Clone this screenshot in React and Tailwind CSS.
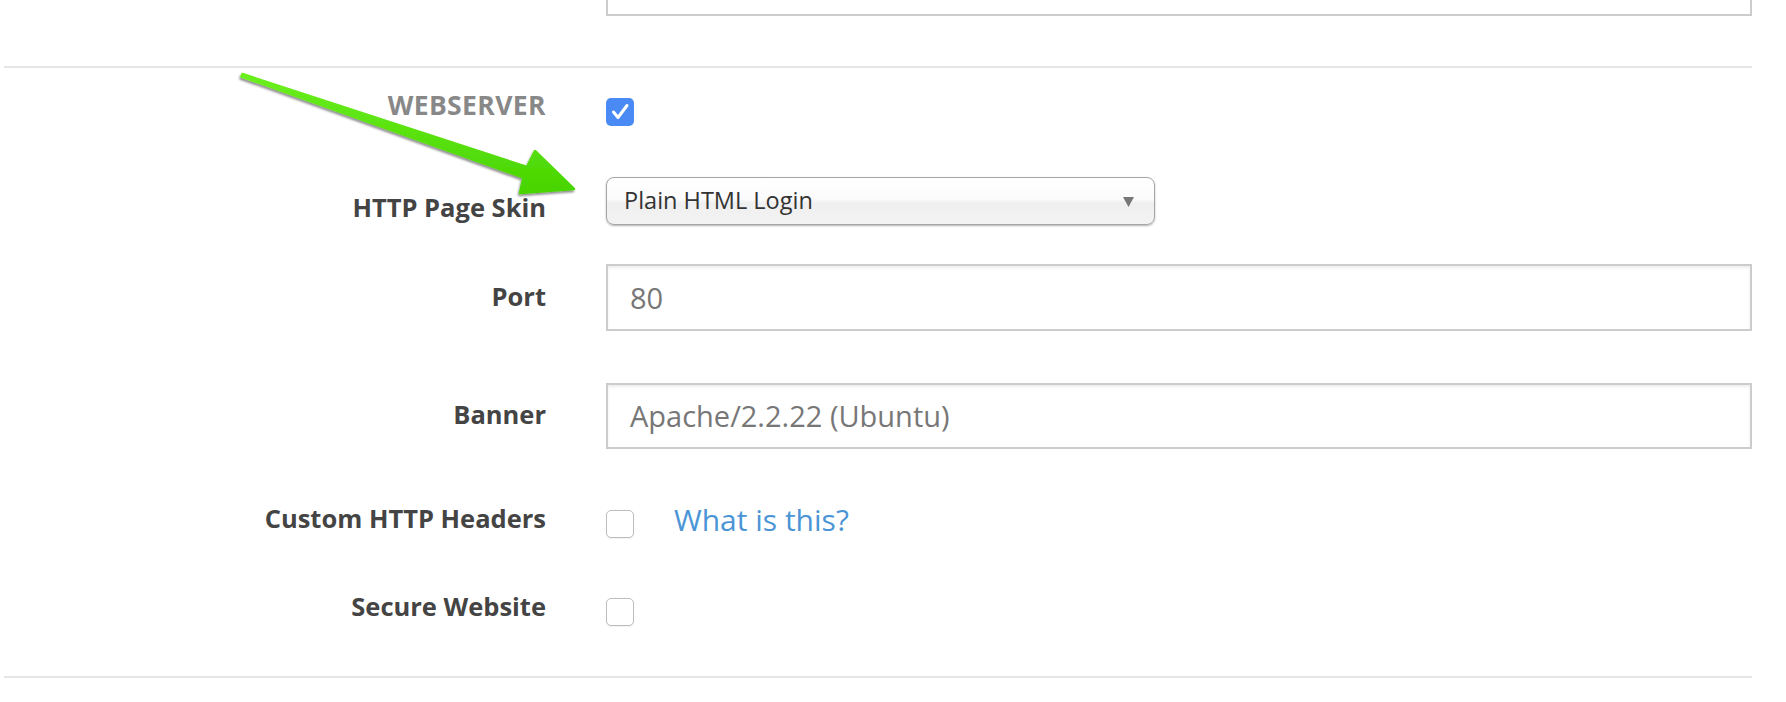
import React from "react";

function Checkbox({ checked }) {
  if (checked) {
    return (
      <div className="w-[28px] h-[28px] rounded-[5px] bg-[#4a8af4] flex items-center justify-center">
        <svg width="28" height="28" viewBox="0 0 28 28">
          <path d="M7.5 14 L12 19.5 L21 7.5" fill="none" stroke="#ffffff" strokeWidth="3" strokeLinecap="round" strokeLinejoin="round" />
        </svg>
      </div>
    );
  }
  return (
    <div className="w-[28px] h-[28px] rounded-[5px] bg-white border-[1.5px] border-[#bdbdbd] shadow-[0_1px_1px_rgba(0,0,0,0.06)]" />
  );
}

function TextInput({ value, h }) {
  return (
    <div className={`${h} w-full border-2 border-[#cccccc] bg-white shadow-[inset_0_2px_3px_rgba(0,0,0,0.07)] flex items-center pl-[22px] text-[29px] text-[#777777]`}>
      {value}
    </div>
  );
}

export default function App() {
  const label = "w-[542px] shrink-0 text-right text-[25.5px] leading-[34px] font-bold text-[#444444]";
  return (
    <div
      className="relative w-[1786px] h-[702px] bg-white overflow-hidden"
      style={{ fontFamily: '"Open Sans", "Noto Sans", sans-serif' }}
    >
      <div className="ml-[4px] w-[1748px]">
        {/* cut-off input at top */}
        <div className="flex">
          <div className="w-[542px] shrink-0" />
          <div className="ml-[60px] flex-1 h-[16px] border-x-2 border-b-2 border-[#cccccc] bg-white" />
        </div>
        <div className="mt-[50px] h-[2px] bg-[#e6e6e6]" />

        {/* WEBSERVER */}
        <div className="flex h-[82px]">
          <div className={`${label} pt-[20px]`}>
            <span className="text-[#888888] text-[26.5px] tracking-[0.4px]">WEBSERVER</span>
          </div>
          <div className="ml-[60px] flex-1 pt-[30px]">
            <Checkbox checked />
          </div>
        </div>

        {/* HTTP Page Skin */}
        <div className="flex h-[90px]">
          <div className={`${label} pt-[40px]`}>HTTP Page Skin</div>
          <div className="ml-[60px] flex-1 pt-[27px]">
            <div className="relative w-[549px] h-[48px] rounded-[8px] border-[1.5px] border-[#a6a6a6] bg-[linear-gradient(to_bottom,#ffffff_0%,#fbfbfb_45%,#efefef_55%,#f3f3f3_100%)] shadow-[0_1px_2px_rgba(0,0,0,0.3)] flex items-center pl-[17px] text-[23.5px] text-[#333333]">
              Plain HTML Login
              <svg className="absolute right-[20px] top-[19px]" width="11" height="10" viewBox="0 0 11 10">
                <path d="M0 0 L11 0 L5.5 10 Z" fill="#777777" />
              </svg>
            </div>
          </div>
        </div>

        {/* Port */}
        <div className="flex h-[120px]">
          <div className={`${label} pt-[39px]`}>Port</div>
          <div className="ml-[60px] flex-1 pt-[24px]">
            <TextInput value="80" h="h-[67px]" />
          </div>
        </div>

        {/* Banner */}
        <div className="flex h-[120px]">
          <div className={`${label} pt-[37px]`}>Banner</div>
          <div className="ml-[60px] flex-1 pt-[23px]">
            <TextInput value="Apache/2.2.22 (Ubuntu)" h="h-[66px]" />
          </div>
        </div>

        {/* Custom HTTP Headers */}
        <div className="flex h-[90px]">
          <div className={`${label} pt-[21px]`}>Custom HTTP Headers</div>
          <div className="ml-[60px] flex-1 flex items-start">
            <div className="mt-[30px]">
              <Checkbox />
            </div>
            <a className="ml-[40px] mt-[20px] text-[30px] leading-[40px] text-[#4b95d6]">What is this?</a>
          </div>
        </div>

        {/* Secure Website */}
        <div className="flex h-[106px]">
          <div className={`${label} pt-[19px]`}>Secure Website</div>
          <div className="ml-[60px] flex-1 pt-[28px]">
            <Checkbox />
          </div>
        </div>

        <div className="h-[2px] bg-[#e6e6e6]" />
      </div>

      {/* green annotation arrow */}
      <svg className="absolute left-0 top-0 pointer-events-none" width="1786" height="702" viewBox="0 0 1786 702">
        <defs>
          <linearGradient id="g" x1="0" y1="0" x2="0" y2="1">
            <stop offset="0%" stopColor="#6bef1e" />
            <stop offset="100%" stopColor="#48d400" />
          </linearGradient>
          <filter id="sh" x="-10%" y="-10%" width="120%" height="130%">
            <feDropShadow dx="-1" dy="2" stdDeviation="1.2" floodColor="#000000" floodOpacity="0.45" />
          </filter>
        </defs>
        <polygon
          points="242.5,74 527,167 535,151 574,189 520,193 523.5,177.5 241.5,76.5"
          fill="url(#g)"
          stroke="url(#g)"
          strokeWidth="2.5"
          strokeLinejoin="round"
          filter="url(#sh)"
        />
      </svg>
    </div>
  );
}
